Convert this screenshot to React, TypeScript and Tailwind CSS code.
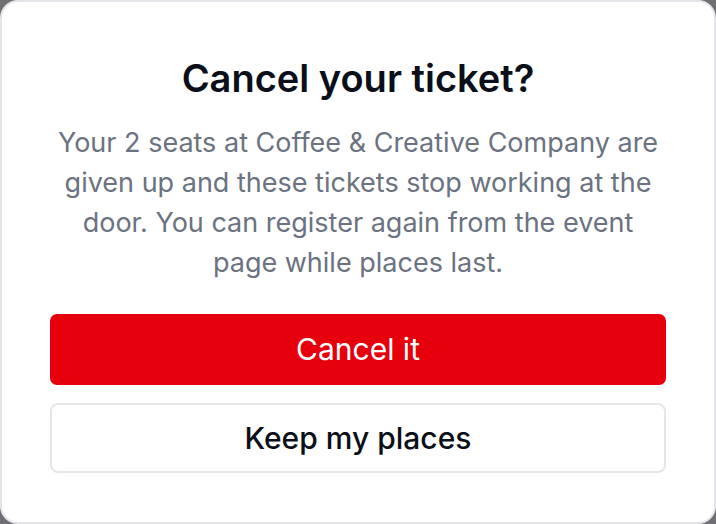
export default function App() {
  return (
    <div className="h-[524px] w-[716px] bg-[#6e6e73]" style={{ fontFamily: "Inter, 'Noto Sans', sans-serif" }}>
      <div className="flex h-full w-full flex-col rounded-[18px] border-2 border-[#e5e5ea] bg-white px-[48px] pt-[54px]">
        <h1 className="text-center text-[38px] leading-[44px] font-semibold text-[#0b0f19]">
          Cancel your ticket?
        </h1>
        <p className="mx-auto mt-[23px] max-w-[616px] text-center text-[27px] leading-[40px] text-[#6b7280]">
          Your 2 seats at Coffee &amp; Creative Company are given up and these tickets stop working at the door. You can register again from the event page while places last.
        </p>
        <div className="mt-[31px] flex flex-col gap-[18px]">
          <button className="h-[71px] rounded-[7px] bg-[#e5000c] text-[30px] text-white">
            Cancel it
          </button>
          <button className="h-[70px] rounded-[8px] border-2 border-[#e6e6ea] bg-white text-[30px] font-medium text-[#0b0f19]">
            Keep my places
          </button>
        </div>
      </div>
    </div>
  );
}
